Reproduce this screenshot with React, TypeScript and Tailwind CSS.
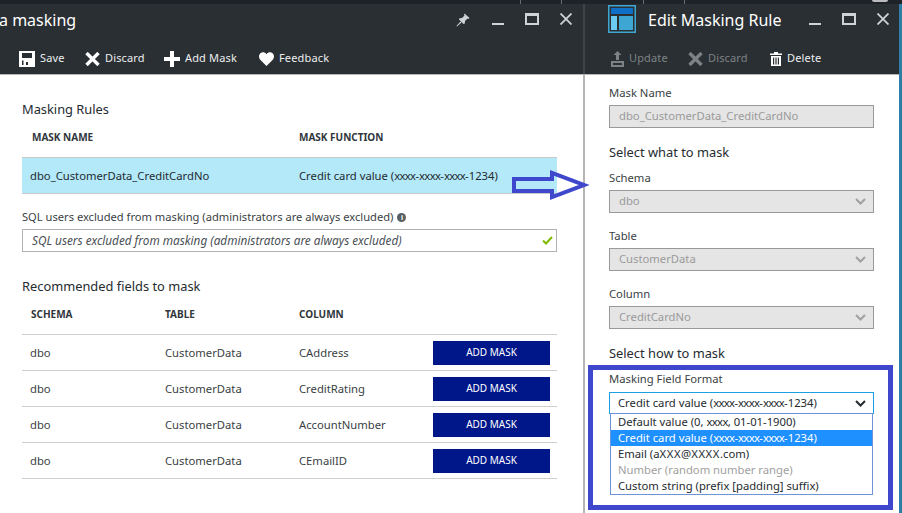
import React from "react";

const font = { fontFamily: '"Noto Sans", "Open Sans", sans-serif' };

function Pin() {
  return (
    <svg width="14" height="14" viewBox="0 0 14 14" fill="#d0d3d5">
      <path d="M8.5 0.5 13.5 5 12.5 6 11.5 5.5 9 8 8.8 10.5 7.5 11 3 6.5 3.5 5.2 6 5 8.5 2.5 8 1.5Z" />
      <path d="M4.5 8.5 5.5 9.5 1 13.5 0.5 13Z" />
    </svg>
  );
}
function WinButtons({ pin }: { pin?: boolean }) {
  return (
    <div className="flex items-start">
      {pin && (
        <div className="mr-[22px] mt-[9px]">
          <Pin />
        </div>
      )}
      <div className="mt-[19px] h-[2px] w-[12px] bg-[#d0d3d5]" />
      <div className="ml-[21px] mt-[9px] h-[12px] w-[14px] border-2 border-t-[3px] border-[#d0d3d5]" />
      <svg className="ml-[21px] mt-[9px]" width="12" height="12" viewBox="0 0 12 12" stroke="#d0d3d5" strokeWidth="1.8">
        <path d="M0.5 0.5 11.5 11.5M11.5 0.5 0.5 11.5" />
      </svg>
    </div>
  );
}
function Cmd({ icon, label, muted, w }: { icon: React.ReactNode; label: string; muted?: boolean; w: string }) {
  return (
    <div className={`flex items-center gap-[5px] ${w}`}>
      {icon}
      <span className={`text-[11px] tracking-[0.15px] ${muted ? "text-[#7d8285]" : "text-[#eceeef]"}`}>{label}</span>
    </div>
  );
}
const SaveIcon = (
  <svg width="16" height="16" viewBox="0 0 16 16" fill="#fff">
    <path fillRule="evenodd" d="M0 0H16V16H0ZM3 2V7H13V2ZM3 9.5V14H4.5V9.5ZM7 11V14H9V11Z" />
  </svg>
);
const XIcon = ({ c }: { c: string }) => (
  <svg width="15" height="14" viewBox="0 0 15 14" stroke={c} strokeWidth="3.4">
    <path d="M1.5 1 13.5 13M13.5 1 1.5 13" />
  </svg>
);
const PlusIcon = (
  <svg width="16" height="16" viewBox="0 0 16 16" fill="#fff">
    <path d="M6 0H10V6H16V10H10V16H6V10H0V6H6Z" />
  </svg>
);
const HeartIcon = (
  <svg width="15" height="14" viewBox="0 0 15 14" fill="#fff">
    <path d="M7.5 14 1 7.5C-.5 5.5-.2 2.6 1.4 1.2 3.2-.4 6 0 7.5 2.2 9-.1 11.8-.4 13.6 1.2 15.2 2.6 15.5 5.5 14 7.5Z" />
  </svg>
);
const UploadIcon = (
  <svg width="13" height="16" viewBox="0 0 13 16" fill="#7d8285">
    <path d="M6.5 0 10.5 4H8V9H5V4H2.5Z" />
    <path fillRule="evenodd" d="M0 10H13V16H0ZM2 12V14H11V12Z" />
  </svg>
);
const TrashIcon = (
  <svg width="12" height="14" viewBox="0 0 12 14" fill="#fff">
    <path d="M4 0H8V1.5H12V3H0V1.5H4Z" />
    <path fillRule="evenodd" d="M1 4H11V14H1ZM3 5.5V12.5H4.2V5.5ZM5.4 5.5V12.5H6.6V5.5ZM7.8 5.5V12.5H9V5.5Z" />
  </svg>
);
const BladeIcon = (
  <svg width="28" height="28" viewBox="0 0 28 28" className="shrink-0">
    <rect x="0" y="0" width="28" height="28" fill="#3ea6d3" />
    <rect x="1.5" y="1.5" width="25" height="25" fill="#2a2f33" />
    <rect x="3" y="3" width="22" height="6" fill="#0f6fc6" />
    <rect x="3" y="11" width="6" height="14" fill="#6ccbf0" />
    <rect x="11" y="11" width="14" height="14" fill="#3ea6d3" />
  </svg>
);
function Chevron({ c }: { c: string }) {
  return (
    <svg width="11" height="7" viewBox="0 0 11 7" fill="none" stroke={c} strokeWidth="2">
      <path d="M1 1 5.5 5.5 10 1" />
    </svg>
  );
}
function Heading({ children, className = "" }: { children: React.ReactNode; className?: string }) {
  return <div className={`text-[12.85px] leading-[18px] text-[#252b30] ${className}`}>{children}</div>;
}
function ThCell({ children, className = "" }: { children: React.ReactNode; className?: string }) {
  return <div className={`text-[10px] font-bold text-[#30363b] ${className}`}>{children}</div>;
}
function Xs() {
  return <span className="tracking-[-0.65px]">xxxx</span>;
}
function CardValue() {
  return (
    <>
      Credit card value (<Xs />-<Xs />-<Xs />-1234)
    </>
  );
}
function Field({ label, value, select, top }: { label: string; value: string; select?: boolean; top: string }) {
  return (
    <div className={top}>
      <div className="text-[11.25px] leading-[16px] text-[#3a3f44]">{label}</div>
      <div className="mt-[4px] flex h-[23px] items-center justify-between border border-[#999] bg-[#e5e5e5] pl-[9px] pr-[7px] text-[11.25px] text-[#9a9a9a]">
        <span>{value}</span>
        {select && <Chevron c="#a0a0a0" />}
      </div>
    </div>
  );
}

const rows = ["CAddress", "CreditRating", "AccountNumber", "CEmailID"];

export default function App() {
  return (
    <div className="relative h-[513px] w-[902px] overflow-hidden bg-white" style={font}>
      <div className="flex h-[4px] bg-[#1e2329]">
        <div className="ml-[520px] h-[4px] w-[1px] bg-[#6a6e72]" />
        <div className="ml-[40px] h-[4px] w-[1px] bg-[#6a6e72]" />
        <div className="ml-[81px] h-[4px] w-[1px] bg-[#6a6e72]" />
        <div className="ml-[40px] h-[4px] w-[1px] bg-[#6a6e72]" />
        <div className="ml-[187px] h-[2px] w-[16px] rounded-b-full bg-[#b9bbbd]" />
      </div>
      <div className="flex h-[509px]">
        {/* left blade */}
        <div className="flex w-[585px] shrink-0 flex-col">
          <div className="h-[70px] border-r-2 border-[#3e4347] bg-[#2a2f33]">
            <div className="flex h-[38px] justify-between pr-[11px]">
              <div className="-ml-[1px] pt-[3px] text-[16px] leading-[26px] text-white">a masking</div>
              <WinButtons pin />
            </div>
            <div className="flex h-[32px] items-center pl-[19px] pt-[1px]">
              <Cmd w="w-[66px]" icon={SaveIcon} label="Save" />
              <Cmd w="w-[79px]" icon={<XIcon c="#fff" />} label="Discard" />
              <Cmd w="w-[95px]" icon={PlusIcon} label="Add Mask" />
              <Cmd w="w-[100px]" icon={HeartIcon} label="Feedback" />
            </div>
          </div>
          <div className="flex-1 border-r-2 border-t border-[#b5b5b5] pl-[22px] pr-[26px] pt-[25px]">
            <Heading>Masking Rules</Heading>
            <div className="mt-[10px] flex h-[18px] items-center">
              <ThCell className="ml-[10px] w-[267px]">MASK NAME</ThCell>
              <ThCell>MASK FUNCTION</ThCell>
            </div>
            <div className="mt-[11px] flex h-[37px] items-center border-y border-[#c8c8c8] bg-[#b3e9f9] pt-[2px] text-[11.25px] text-[#252b30]">
              <span className="ml-[8px] w-[269px]">dbo_CustomerData_CreditCardNo</span>
              <span>
                <CardValue />
              </span>
            </div>
            <div className="mt-[14px] flex h-[18px] items-center gap-[4px] text-[11.15px] text-[#3a3f44]">
              <span>SQL users excluded from masking (administrators are always excluded)</span>
              <span className="flex h-[9px] w-[9px] items-center justify-center rounded-full bg-[#5a5f64] text-[7px] font-bold leading-none text-white">i</span>
            </div>
            <div className="mt-[3px] flex h-[23px] items-center justify-between border border-[#b3b3b3] pl-[9px] pr-[3px] text-[11.75px] italic text-[#4a4f54]">
              <span>SQL users excluded from masking (administrators are always excluded)</span>
              <svg width="11" height="9" viewBox="0 0 11 9" fill="none" stroke="#7fba00" strokeWidth="2">
                <path d="M1 4.5 4 7.5 10 1" />
              </svg>
            </div>
            <Heading className="mt-[25px]">Recommended fields to mask</Heading>
            <div className="mt-[10px] flex h-[18px] items-center pl-[9px]">
              <ThCell className="w-[134px]">SCHEMA</ThCell>
              <ThCell className="w-[134px]">TABLE</ThCell>
              <ThCell>COLUMN</ThCell>
            </div>
            <div className="mt-[11px] border-t border-[#cfcfcf]">
              {rows.map((r) => (
                <div key={r} className="flex h-[36px] items-center border-b border-[#cfcfcf] pl-[8px] pr-[7px] text-[11.25px] text-[#3a3f44]">
                  <span className="w-[135px] pt-[2px]">dbo</span>
                  <span className="w-[134px] pt-[2px]">CustomerData</span>
                  <span className="flex-1 pt-[2px]">{r}</span>
                  <div className="flex h-[24px] w-[117px] items-center justify-center bg-[#00178a] text-[10px] text-white">ADD MASK</div>
                </div>
              ))}
            </div>
          </div>
        </div>

        {/* right blade */}
        <div className="flex w-[314px] shrink-0 flex-col">
          <div className="h-[70px] bg-[#2a2f33] pl-[23px]">
            <div className="flex h-[38px] justify-between pr-[10px]">
              <div className="flex items-start gap-[12px] pt-[1px]">
                {BladeIcon}
                <span className="pt-[2px] text-[16px] leading-[26px] text-white">Edit Masking Rule</span>
              </div>
              <WinButtons />
            </div>
            <div className="flex h-[32px] items-center pl-[3px] pt-[1px]">
              <Cmd w="w-[77px]" muted icon={UploadIcon} label="Update" />
              <Cmd w="w-[82px]" muted icon={<XIcon c="#7d8285" />} label="Discard" />
              <Cmd w="w-[70px]" icon={TrashIcon} label="Delete" />
            </div>
          </div>
          <div className="flex-1 border-t border-[#b5b5b5] pl-[24px] pr-[25px] pt-[10px]">
            <Field top="" label="Mask Name" value="dbo_CustomerData_CreditCardNo" />
            <Heading className="mt-[15px]">Select what to mask</Heading>
            <Field top="mt-[9px]" label="Schema" value="dbo" select />
            <Field top="mt-[15px]" label="Table" value="CustomerData" select />
            <Field top="mt-[15px]" label="Column" value="CreditCardNo" select />
            <Heading className="mt-[15px]">Select how to mask</Heading>
            <div className="mt-[9px] text-[11.25px] leading-[16px] text-[#3a3f44]">Masking Field Format</div>
            <div className="relative mt-[5px] flex h-[22px] items-center justify-between border border-[#1ba1e2] pl-[8px] pr-[7px] text-[11.25px] text-[#252b30]">
              <span>
                <CardValue />
              </span>
              <Chevron c="#252b30" />
              <div className="absolute left-0 right-0 top-[20px] border border-[#6f93d8] bg-white text-[11.25px] leading-[16px]">
                <div className="pl-[7px]">
                  Default value (0, <Xs />, 01-01-1900)
                </div>
                <div className="bg-[#1e90ff] pl-[7px] text-white">
                  <CardValue />
                </div>
                <div className="pl-[7px]">
                  Email (a<span className="tracking-[0.6px]">XXX</span>@<span className="tracking-[0.6px]">XXXX</span>.com)
                </div>
                <div className="pl-[7px] text-[#a0a0a0]">Number (random number range)</div>
                <div className="pl-[7px]">Custom string (prefix [padding] suffix)</div>
              </div>
            </div>
          </div>
        </div>
        <div className="w-[3px] shrink-0 bg-[#2f7ea8]" />
      </div>

      {/* annotations */}
      <div className="pointer-events-none absolute left-[588px] top-[365px] h-[145px] w-[305px] border-[5px] border-[#3f48cc]" />
      <svg className="pointer-events-none absolute left-[510px] top-[168px]" width="82" height="36" viewBox="0 0 82 36" fill="none" stroke="#3f48cc" strokeWidth="4">
        <path d="M4 11H42V5L74 17 42 29V23H4Z" />
      </svg>
    </div>
  );
}
